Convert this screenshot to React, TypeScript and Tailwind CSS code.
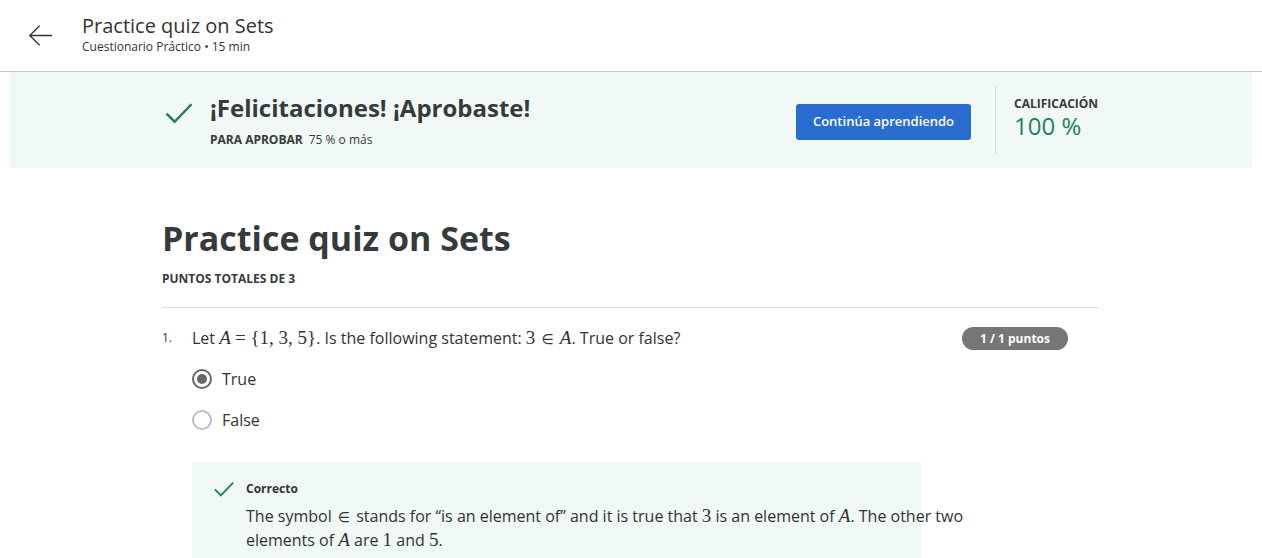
import React from 'react';

const M: React.FC<{ children: React.ReactNode; i?: boolean }> = ({ children, i }) => (
  <span className={`font-['Liberation_Serif',serif] text-[19px] leading-[20px] ${i ? 'italic' : ''}`}>{children}</span>
);

const In = () => <span className="font-['DejaVu_Sans',sans-serif] text-[14px] leading-[20px] mx-[2px]">∈</span>;

const Check: React.FC<{ className?: string }> = ({ className }) => (
  <svg viewBox="0 0 24 24" fill="none" stroke="currentColor" strokeWidth={2} className={className}>
    <path d="M2 12.5l6.5 6.5L22 5" />
  </svg>
);

export default function App() {
  return (
    <div className="w-[1262px] h-[558px] overflow-hidden bg-white font-['Open_Sans',sans-serif] text-[#1f1f1f]">
      <header className="h-[72px] border-b border-[#c8c8c8] flex items-center">
        <div className="w-[82px] pl-[28px] flex">
          <svg viewBox="0 0 28 28" width="25" height="25" fill="none" stroke="#333" strokeWidth={1.5}>
            <path d="M27 14H2M13 3L2 14l11 11" />
          </svg>
        </div>
        <div className="flex flex-col -mt-[4px]">
          <span className="text-[20px] leading-[26px] text-[#333]">Practice quiz on Sets</span>
          <span className="text-[12px] leading-[16px] text-[#333]">Cuestionario Práctico • 15 min</span>
        </div>
      </header>

      <section className="mx-[10px] h-[96px] bg-[#f0f9f6] flex items-center">
        <div className="ml-[154px] w-[36px] flex self-start mt-[26px]">
          <Check className="w-[30px] h-[30px] text-[#1f8354]" />
        </div>
        <div className="ml-[10px] flex flex-col">
          <h2 className="text-[24px] leading-[32px] font-bold text-[#373a3c]">¡Felicitaciones! ¡Aprobaste!</h2>
          <div className="mt-[8px] text-[12px] leading-[16px] text-[#373a3c]">
            <span className="font-bold">PARA APROBAR</span>
            <span className="ml-[6px]">75 % o más</span>
          </div>
        </div>
        <div className="flex-1" />
        <button className="mt-[4px] w-[175px] h-[36px] rounded-[3px] bg-[#2a6ccf] text-white text-[13px] font-semibold">
          Continúa aprendiendo
        </button>
        <div className="ml-[24px] w-px h-[68px] bg-[#dcdcdc]" />
        <div className="ml-[18px] w-[238px] flex flex-col self-start mt-[23px]">
          <span className="text-[12px] leading-[18px] font-bold text-[#373a3c]">CALIFICACIÓN</span>
          <span className="text-[24px] leading-[26px] text-[#1f8354]">100 %</span>
        </div>
      </section>

      <main className="ml-[162px] w-[936px] pt-[48px]">
        <h1 className="text-[34px] leading-[44px] font-bold text-[#373a3c]">Practice quiz on Sets</h1>
        <div className="mt-[11px] text-[12px] leading-[16px] font-bold text-[#373a3c]">PUNTOS TOTALES DE 3</div>
        <div className="mt-[20px] h-px bg-[#dcdcdc]" />

        <div className="mt-[18px] flex">
          <span className="w-[30px] text-[12px] leading-[24px] text-[#333]">1.</span>
          <div className="flex-1">
            <div className="flex items-center justify-between h-[24px]">
              <p className="text-[16px] leading-[24px] text-[#333]">
                Let <M i>A</M> <M>= {'{'}1, 3, 5{'}'}</M>. Is the following statement: <M>3</M> <In /> <M i>A</M>. True or false?
              </p>
              <span className="mr-[30px] h-[23px] px-[18px] rounded-full bg-[#767676] text-white text-[12px] font-bold leading-[23px]">
                1 / 1 puntos
              </span>
            </div>

            <div className="mt-[17px] flex flex-col gap-[17px]">
              <label className="flex items-center h-[24px]">
                <span className="w-[20px] h-[20px] rounded-full border-2 border-[#666] flex items-center justify-center">
                  <span className="w-[10px] h-[10px] rounded-full bg-[#666]" />
                </span>
                <span className="ml-[10px] text-[16px] text-[#333]">True</span>
              </label>
              <label className="flex items-center h-[24px]">
                <span className="w-[20px] h-[20px] rounded-full border-2 border-[#bdbdbd]" />
                <span className="ml-[10px] text-[16px] text-[#333]">False</span>
              </label>
            </div>

            <div className="mt-[30px] w-[729px] h-[100px] bg-[#f0f9f6] pt-[16px] pl-[21px] overflow-visible">
              <div className="flex items-center h-[22px]">
                <Check className="w-[22px] h-[22px] text-[#1f8354]" />
                <span className="ml-[11px] text-[12px] font-bold text-[#333]">Correcto</span>
              </div>
              <p className="mt-[4px] ml-[33px] w-[730px] text-[16px] leading-[24px] text-[#333]">
                The symbol <In /> stands for “is an element of” and it is true that <M>3</M> is an element of <M i>A</M>. The other two elements of <M i>A</M> are <M>1</M> and <M>5</M>.
              </p>
            </div>
          </div>
        </div>
      </main>
    </div>
  );
}
